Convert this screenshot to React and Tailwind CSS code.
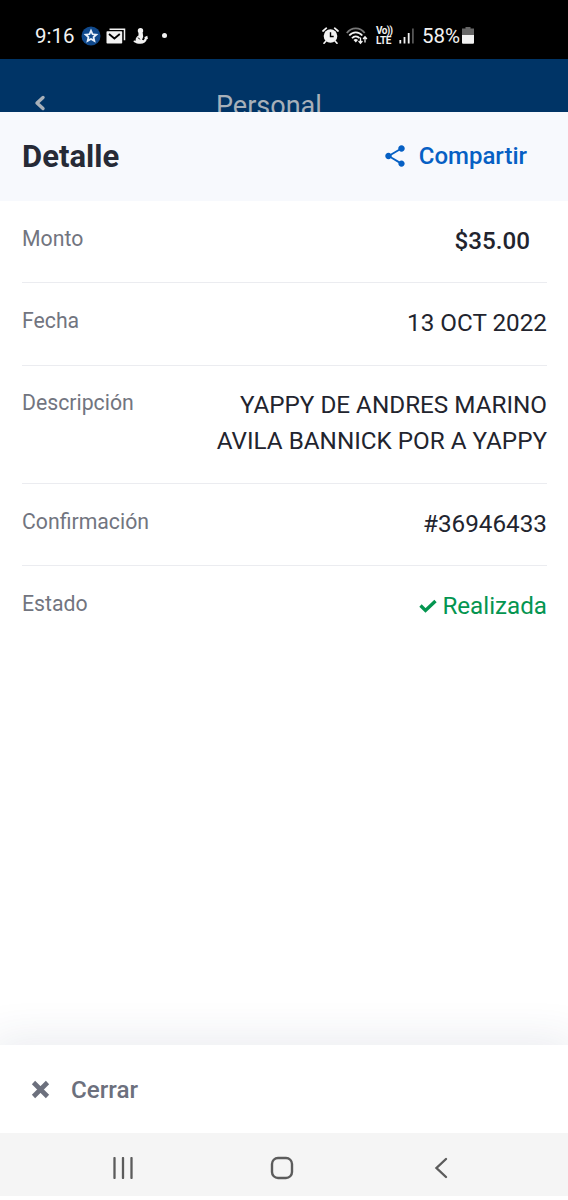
import React from 'react';
import { MdShare } from 'react-icons/md';

const details = [
  { label: 'Monto', value: '$35.00', type: 'amount' },
  { label: 'Fecha', value: '13 OCT 2022' },
  { label: 'Descripción', value: 'YAPPY DE ANDRES MARINO AVILA BANNICK POR A YAPPY' },
  { label: 'Confirmación', value: '#36946433' },
  { label: 'Estado', value: 'Realizada', type: 'status' }
];

const StarBadgeIcon = () => (
  <svg className="w-5 h-5 ml-[6px]" viewBox="0 0 20 20">
    <circle cx="10" cy="10" r="9.5" fill="#10498c" />
    <path d="M10 2.6l2.2 4.9 5.2.5-3.9 3.5 1.2 5.2L10 14l-4.7 2.7 1.2-5.2L2.6 8l5.2-.5z" fill="#e8f0fa" />
    <path d="M10 7l1 2 2.2.3-1.6 1.5.4 2.2-2-1.1-2 1.1.4-2.2L6.8 9.3 9 9z" fill="#10498c" />
  </svg>
);

const MailIcon = () => (
  <svg className="w-5 h-4 ml-[5px]" viewBox="0 0 20 16">
    <path d="M3.5 1.2h15v11" fill="none" stroke="#f2f2f2" strokeWidth="1.5" />
    <rect x="0.5" y="3.3" width="15.7" height="12.2" rx="0.8" fill="#f2f2f2" />
    <path d="M3 6l5.4 4.5L13.8 6" fill="none" stroke="#000" strokeWidth="1.8" />
  </svg>
);

const FigureIcon = () => (
  <svg className="w-4 h-4 ml-[7px]" viewBox="0 0 16 16" fill="#f2f2f2">
    <circle cx="7.5" cy="2.7" r="2.7" />
    <path d="M5.5 4.8h4.2l.5 4-1.2 3 1.8.4 1.2-2.4-1-.6 3.3-1.5.7 3.6-1-.5c-.8 3.2-3.2 5-6.5 5-2.7 0-4.500-.6-6.600-1.900-.7-.5-.3-1.500.5-1.400l1.300.2C2.300 10 4 8.300 5.500 7.500z" />
    <path d="M4.8 9.7l2.4 1.6" stroke="#000" strokeWidth="0.8" fill="none" />
  </svg>
);

const AlarmIcon = () => (
  <svg className="w-[17px] h-[17px]" viewBox="0 0 17 17">
    <circle cx="8.5" cy="9" r="6.8" fill="#f2f2f2" />
    <path d="M1 4L4.3 1.2M12.7 1.2L16 4M4 14l-2 2.2M13 14l2 2.2" stroke="#f2f2f2" strokeWidth="1.7" strokeLinecap="round" />
    <path d="M8.5 5.2v4.3h3.2" fill="none" stroke="#000" strokeWidth="1.4" />
  </svg>
);

const WifiIcon = () => (
  <svg className="w-[22px] h-[18px] ml-[7px]" viewBox="0 0 22 18" fill="none">
    <path d="M.8 6C5.5-.2 14-.2 18.7 6" stroke="#777" strokeWidth="1.8" />
    <path d="M3.3 8.5c3.5-4.3 9.5-4.3 13 0M6 11.3c2-2.6 5.5-2.6 7.5 0" stroke="#f2f2f2" strokeWidth="1.8" />
    <path d="M7.5 13c1.3-1.2 3.2-1.2 4.5 0L9.8 15.6z" fill="#f2f2f2" />
    <path d="M14.5 10.5V16M12.6 14l1.9 2.2 1.9-2.2M19 15.5V10M17.1 12L19 9.8l1.9 2.2" stroke="#f2f2f2" strokeWidth="1.3" />
  </svg>
);

const SignalIcon = () => (
  <svg className="w-4 h-4 ml-[5px]" viewBox="0 0 16 16">
    <path d="M1.3 12v3.5M5.5 9v6.5M9.7 5v10.5" stroke="#f2f2f2" strokeWidth="1.8" />
    <path d="M13.9 .5v15" stroke="#555" strokeWidth="1.8" />
  </svg>
);

const BatteryIcon = () => (
  <svg className="w-3 h-[17px] ml-[2px]" viewBox="0 0 12 17">
    <path d="M3.5 0h5v1.6H12V8H0V1.6h3.5z" fill="#666" />
    <path d="M0 8h12v7.5c0 .8-.5 1.3-1.3 1.3H1.3C.5 16.8 0 16.3 0 15.5z" fill="#f2f2f2" />
  </svg>
);

const CheckIcon = () => (
  <svg className="w-[18px] h-[14px] mt-px" viewBox="0 0 18 14" fill="none">
    <path d="M1.5 6.6l5 4.8L16.5 2" stroke="#049550" strokeWidth="3.4" />
  </svg>
);

const StatusBar = () => (
  <div className="h-[59px] shrink-0 bg-black flex items-center pl-[35px] pt-[13px] pb-[1px] pr-[94px] text-[#f2f2f2]">
    <div className="flex items-center h-[45px]">
      <span className="text-[20.5px] leading-6 w-10">9:16</span>
      <StarBadgeIcon />
      <MailIcon />
      <FigureIcon />
      <span className="w-[5px] h-[5px] ml-[13px] rounded-full bg-[#f2f2f2]" />
    </div>
    <div className="flex items-center h-[45px] ml-auto">
      <AlarmIcon />
      <WifiIcon />
      <div className="ml-[8px] w-[18px] text-[10px] leading-[10px] font-bold whitespace-nowrap">
        <div className="tracking-[-0.6px]">Vo))</div>
        <div className="tracking-[-0.3px]">LTE</div>
      </div>
      <SignalIcon />
      <span className="text-[20.5px] leading-6 ml-[7px] whitespace-nowrap">58%</span>
      <BatteryIcon />
    </div>
  </div>
);

const DetailRow = ({ item, last }) => (
  <div className={last ? 'flex justify-between pt-[21.75px]' : 'flex justify-between pt-[21.75px] pb-[23.5px] border-b border-[#ebecf0]'}>
    <span className="text-[21.25px] leading-8 text-[#72757f]">{item.label}</span>
    {item.type === 'amount' && (
      <span className="text-[24.2px] leading-9 font-medium text-[#22242e] pr-[17px]">{item.value}</span>
    )}
    {item.type === 'status' && (
      <span className="flex items-center gap-[5px] text-[24.2px] leading-9 text-[#049550]">
        <CheckIcon />
        {item.value}
      </span>
    )}
    {!item.type && (
      <span className="text-[24.25px] leading-9 text-right text-[#22242e] max-w-[345px]">{item.value}</span>
    )}
  </div>
);

const App = () => {
  return (
    <div className="w-[568px] h-[1200px] bg-white flex flex-col overflow-hidden font-['Roboto',sans-serif]">
      <StatusBar />

      {/* Dimmed page header behind the sheet */}
      <div className="h-[53px] shrink-0 bg-[#003466] flex items-start text-[#a7b0b9]">
        <svg className="w-3 h-4 ml-[34px] mt-[36px]" viewBox="0 0 12 16" fill="none">
          <path d="M9 2.5L3 8l6 5.5" stroke="currentColor" strokeWidth="3.4" strokeLinecap="round" strokeLinejoin="round" />
        </svg>
        <span className="text-[27px] leading-8 ml-[170px] mt-[31px]">Personal</span>
      </div>

      <div className="relative h-[89px] shrink-0 bg-[#f7f9fd] flex items-center justify-between pl-[22px] pr-[41px]">
        <h1 className="text-[31px] leading-9 font-bold text-[#262a36]">Detalle</h1>
        <button className="flex items-center text-2xl font-medium text-[#0660c4] pb-px">
          <MdShare className="w-[26px] h-[26px] mr-[11px]" />
          Compartir
        </button>
      </div>

      <div className="flex-1 pl-[22px] pr-[21px]">
        {details.map((item, index) => (
          <DetailRow key={item.label} item={item} last={index === details.length - 1} />
        ))}
      </div>

      <div className="h-[66px] shrink-0 overflow-hidden flex items-end">
        <div className="w-full h-px shadow-[0_14px_48px_10px_rgba(40,55,100,0.2)]" />
      </div>

      {/* Footer action */}
      <div className="h-[87px] shrink-0 bg-white flex items-center pl-[31px] text-[#6c707d]">
        <svg className="w-[19px] h-[19px]" viewBox="0 0 19 19">
          <path d="M2.5 2.5l14 14M16.5 2.5l-14 14" stroke="currentColor" strokeWidth="4.6" />
        </svg>
        <span className="text-[24.2px] font-medium ml-[21px] pt-px">Cerrar</span>
      </div>

      <div className="h-[63px] mb-1 shrink-0 bg-[#f5f5f5] flex items-center pt-[7px] pl-[112px] text-[#5c5c5c]">
        <svg className="w-[22px] h-[22px]" viewBox="0 0 22 22">
          <path d="M2.5 1v20M11 1v20M19.5 1v20" stroke="currentColor" strokeWidth="2.3" strokeLinecap="round" />
        </svg>
        <svg className="w-6 h-6 ml-[136px]" viewBox="0 0 24 24" fill="none">
          <rect x="2" y="2" width="20" height="20" rx="6" stroke="currentColor" strokeWidth="2.4" />
        </svg>
        <svg className="w-[14px] h-[22px] ml-[140px]" viewBox="0 0 14 22" fill="none">
          <path d="M12 2L2.5 11l9.5 9" stroke="currentColor" strokeWidth="2.4" strokeLinecap="round" />
        </svg>
      </div>
    </div>
  );
};

export default App;
